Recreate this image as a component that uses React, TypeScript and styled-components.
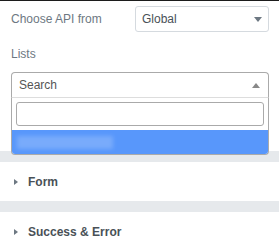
import styled, { createGlobalStyle } from 'styled-components'

const GlobalStyle = createGlobalStyle`
  body {
    margin: 0;
    background: #fff;
    font-family: 'Liberation Sans', Arial, sans-serif;
  }
`

export default function App() {
  return (
    <>
      <GlobalStyle />
      <Panel>
        <Controls>
          <FieldRow>
            <Label>Choose API from</Label>
            <Select>
              <SelectValue>Global</SelectValue>
              <Caret $dir="down" />
            </Select>
          </FieldRow>
          <StackLabel>Lists</StackLabel>
          <ComboBox>
            <Selection>
              <Placeholder>Search</Placeholder>
              <Caret $dir="up" $color="#888" />
            </Selection>
            <Dropdown>
              <SearchBox>
                <SearchInput type="text" />
              </SearchBox>
              <Option>
                <BlurredText />
              </Option>
            </Dropdown>
          </ComboBox>
        </Controls>
        <Divider />
        <SectionHead>
          <Arrow />
          <SectionTitle>Form</SectionTitle>
        </SectionHead>
        <Divider />
        <SectionHead>
          <Arrow />
          <SectionTitle>Success &amp; Error</SectionTitle>
        </SectionHead>
      </Panel>
    </>
  )
}

const Panel = styled.div`
  width: 279px;
  height: 248px;
  overflow: hidden;
  border-top: 1px solid #1c1c1c;
  box-sizing: border-box;
`

const Controls = styled.div`
  padding: 5px 10px 0 11px;
  height: 150px;
  box-sizing: border-box;
  position: relative;
  z-index: 2;
`

const FieldRow = styled.div`
  display: flex;
  align-items: center;
  justify-content: space-between;
  height: 26px;
`

const Label = styled.span`
  font-size: 12px;
  color: #6d7882;
`

const StackLabel = styled(Label)`
  display: block;
  margin-top: 15px;
  line-height: 14px;
`

const Select = styled.div`
  width: 134px;
  height: 26px;
  box-sizing: border-box;
  border: 1px solid #d5dadf;
  border-radius: 3px;
  display: flex;
  align-items: center;
  justify-content: space-between;
  padding: 0 6px 0 6px;
`

const SelectValue = styled.span`
  font-size: 12px;
  color: #495157;
`

const Caret = styled.span<{ $dir: 'up' | 'down'; $color?: string }>`
  width: 0;
  height: 0;
  border-left: 4px solid transparent;
  border-right: 4px solid transparent;
  ${(p) =>
    p.$dir === 'down'
      ? `border-top: 5px solid ${p.$color || '#6d7882'};`
      : `border-bottom: 5px solid ${p.$color || '#6d7882'};`}
`

const ComboBox = styled.div`
  position: relative;
  margin-top: 11px;
  width: 258px;
`

const Selection = styled.div`
  height: 26px;
  box-sizing: border-box;
  border: 1px solid #aaa;
  border-bottom-color: #ddd;
  border-radius: 4px 4px 0 0;
  display: flex;
  align-items: center;
  justify-content: space-between;
  padding: 0 8px 0 7px;
`

const Placeholder = styled.span`
  font-size: 12px;
  color: #555;
`

const Dropdown = styled.div`
  position: absolute;
  top: 26px;
  left: 0;
  right: 0;
  background: #fff;
  border: 1px solid #aaa;
  border-top: none;
  border-radius: 0 0 4px 4px;
  overflow: hidden;
`

const SearchBox = styled.div`
  padding: 4px 4px 4px 4px;
`

const SearchInput = styled.input`
  display: block;
  width: 100%;
  height: 24px;
  box-sizing: border-box;
  border: 1px solid #aaa;
  border-radius: 3px;
  outline: none;
`

const Option = styled.div`
  height: 24px;
  background: #5897fb;
  display: flex;
  align-items: center;
  padding-left: 5px;
`

const BlurredText = styled.span`
  width: 96px;
  height: 13px;
  background: rgba(255, 255, 255, 0.2);
  filter: blur(2px);
`

const Divider = styled.div`
  height: 11px;
  background: #e6e9ec;
`

const SectionHead = styled.div`
  height: 39px;
  display: flex;
  align-items: center;
  gap: 10px;
  padding-left: 14px;
`

const Arrow = styled.span`
  width: 0;
  height: 0;
  border-top: 3px solid transparent;
  border-bottom: 3px solid transparent;
  border-left: 4px solid #6d7882;
`

const SectionTitle = styled.span`
  font-size: 12px;
  font-weight: bold;
  color: #495157;
`
